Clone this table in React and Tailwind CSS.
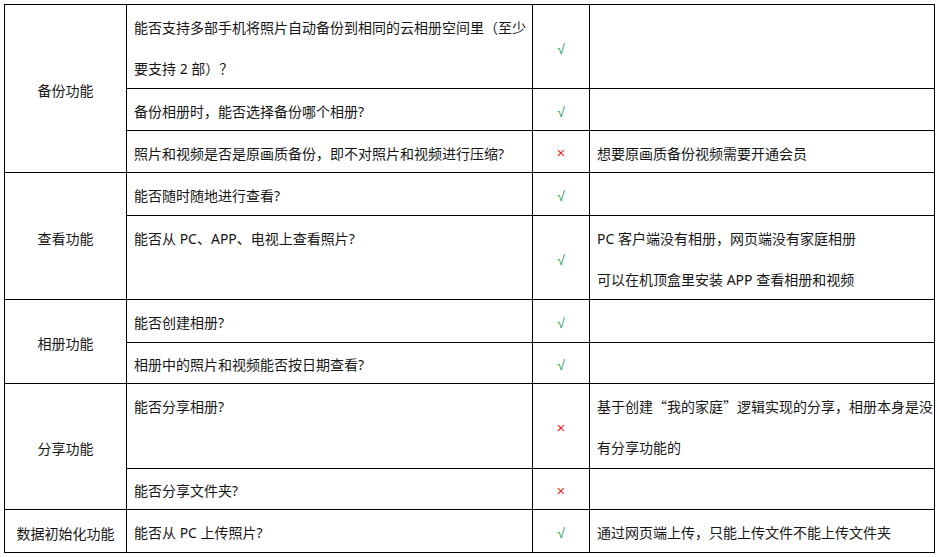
const Q = ({ children }) => <span style={{ fontFamily: '"Noto Sans CJK SC", sans-serif' }}>{children}</span>;

const rows = [
  { group: '备份功能', span: 3, h: 'h-[84px]', tall: true, q: ['能否支持多部手机将照片自动备份到相同的云相册空间里（至少', '要支持 2 部）？'], ok: true, note: [] },
  { h: 'h-[42px]', q: ['备份相册时，能否选择备份哪个相册?'], ok: true, note: [] },
  { h: 'h-[42px]', q: ['照片和视频是否是原画质备份，即不对照片和视频进行压缩?'], ok: false, note: ['想要原画质备份视频需要开通会员'] },
  { group: '查看功能', span: 2, h: 'h-[43px]', q: ['能否随时随地进行查看?'], ok: true, note: [] },
  { h: 'h-[84px]', tall: true, q: ['能否从 PC、APP、电视上查看照片?'], ok: true, note: ['PC 客户端没有相册，网页端没有家庭相册', '可以在机顶盒里安装 APP 查看相册和视频'] },
  { group: '相册功能', span: 2, h: 'h-[43px]', q: ['能否创建相册?'], ok: true, note: [] },
  { h: 'h-[41px]', q: ['相册中的照片和视频能否按日期查看?'], ok: true, note: [] },
  { group: '分享功能', span: 2, h: 'h-[85px]', tall: true, q: ['能否分享相册?'], ok: false, note: [<>基于创建<Q>“</Q>我的家庭<Q>”</Q>逻辑实现的分享，相册本身是没</>, '有分享功能的'] },
  { h: 'h-[41px]', q: ['能否分享文件夹?'], ok: false, note: [] },
  { group: '数据初始化功能', span: 1, h: 'h-[43px]', q: ['能否从 PC 上传照片?'], ok: true, note: ['通过网页端上传，只能上传文件不能上传文件夹'] },
];

function Lines({ lines, tall }) {
  return (
    <div className={tall ? 'leading-[41px] relative top-[2px]' : 'leading-[20px]'}>
      {lines.map((l, i) => <div key={i} className="whitespace-nowrap">{l}</div>)}
    </div>
  );
}

export default function App() {
  return (
    <div className="w-[938px] h-[557px] bg-white p-[4px] text-[14px] text-[#161616]" style={{ fontFamily: '"Noto Sans", "Noto Sans CJK SC", sans-serif' }}>
      <table className="table-fixed border-collapse w-[930px]">
        <colgroup>
          <col className="w-[122px]" />
          <col className="w-[406px]" />
          <col className="w-[57px]" />
          <col className="w-[345px]" />
        </colgroup>
        <tbody>
          {rows.map((r, i) => (
            <tr key={i} className={r.h}>
              {r.group && (
                <td rowSpan={r.span} className="border border-black text-center align-middle pt-[4px] p-0">
                  {r.group}
                </td>
              )}
              <td className={`border border-black pl-[7px] pr-0 pb-0 ${r.tall ? 'align-top pt-0' : 'align-middle pt-[4px]'}`}>
                <Lines lines={r.q} tall={r.tall} />
              </td>
              <td className="border border-black text-center align-middle pt-[4px] p-0">
                {r.ok ? (
                  <span className="text-[#1f9d5a] text-[14px]" style={{ fontFamily: '"Liberation Sans", sans-serif' }}>√</span>
                ) : (
                  <span className="text-[#e8262a] text-[15px]" style={{ fontFamily: '"Liberation Sans", sans-serif' }}>×</span>
                )}
              </td>
              <td className={`border border-black pl-[7px] pr-0 pb-0 ${r.tall ? 'align-top pt-0' : 'align-middle pt-[4px]'}`}>
                {r.note.length > 0 && <Lines lines={r.note} tall={r.tall} />}
              </td>
            </tr>
          ))}
        </tbody>
      </table>
    </div>
  );
}
